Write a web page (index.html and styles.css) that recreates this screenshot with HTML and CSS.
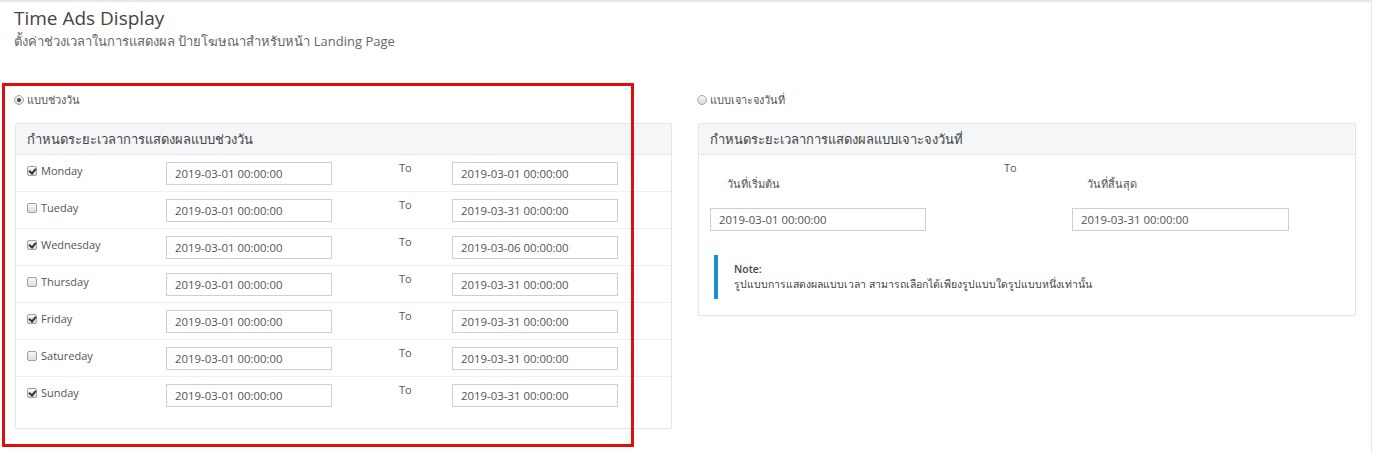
FILE: index.html
```html
<!DOCTYPE html>
<html lang="th">
<head>
    <meta charset="UTF-8">
    <meta name="viewport" content="width=device-width, initial-scale=1.0">
    <title>Time Ads Display</title>
    <link rel="stylesheet" href="styles.css">
</head>
<body>
    <div class="page">
        <div class="page-head">
            <h1>Time Ads Display</h1>
            <p class="sub">ตั้งค่าช่วงเวลาในการแสดงผล ป้ายโฆษณาสำหรับหน้า Landing Page</p>
        </div>

        <div class="cols">
            <!-- แบบช่วงวัน -->
            <div class="col">
                <div class="option"><span class="radio on"></span> แบบช่วงวัน</div>
                <div class="panel">
                    <div class="panel-head">กำหนดระยะเวลาการแสดงผลแบบช่วงวัน</div>
                    <div class="panel-body days">
                        <div class="day-row">
                            <label class="day"><span class="chk on"></span>Monday</label>
                            <input class="field" type="text" value="2019-03-01 00:00:00">
                            <span class="to">To</span>
                            <input class="field" type="text" value="2019-03-01 00:00:00">
                        </div>
                        <div class="day-row">
                            <label class="day"><span class="chk"></span>Tueday</label>
                            <input class="field" type="text" value="2019-03-01 00:00:00">
                            <span class="to">To</span>
                            <input class="field" type="text" value="2019-03-31 00:00:00">
                        </div>
                        <div class="day-row">
                            <label class="day"><span class="chk on"></span>Wednesday</label>
                            <input class="field" type="text" value="2019-03-01 00:00:00">
                            <span class="to">To</span>
                            <input class="field" type="text" value="2019-03-06 00:00:00">
                        </div>
                        <div class="day-row">
                            <label class="day"><span class="chk"></span>Thursday</label>
                            <input class="field" type="text" value="2019-03-01 00:00:00">
                            <span class="to">To</span>
                            <input class="field" type="text" value="2019-03-31 00:00:00">
                        </div>
                        <div class="day-row">
                            <label class="day"><span class="chk on"></span>Friday</label>
                            <input class="field" type="text" value="2019-03-01 00:00:00">
                            <span class="to">To</span>
                            <input class="field" type="text" value="2019-03-31 00:00:00">
                        </div>
                        <div class="day-row">
                            <label class="day"><span class="chk"></span>Satureday</label>
                            <input class="field" type="text" value="2019-03-01 00:00:00">
                            <span class="to">To</span>
                            <input class="field" type="text" value="2019-03-31 00:00:00">
                        </div>
                        <div class="day-row">
                            <label class="day"><span class="chk on"></span>Sunday</label>
                            <input class="field" type="text" value="2019-03-01 00:00:00">
                            <span class="to">To</span>
                            <input class="field" type="text" value="2019-03-31 00:00:00">
                        </div>
                    </div>
                </div>
            </div>

            <!-- แบบเจาะจงวันที่ -->
            <div class="col">
                <div class="option"><span class="radio"></span> แบบเจาะจงวันที่</div>
                <div class="panel">
                    <div class="panel-head">กำหนดระยะเวลาการแสดงผลแบบเจาะจงวันที่</div>
                    <div class="panel-body range">
                        <div class="range-grid">
                            <div>
                                <div class="range-label start">วันที่เริ่มต้น</div>
                                <input class="field wide" type="text" value="2019-03-01 00:00:00">
                            </div>
                            <span class="to">To</span>
                            <div>
                                <div class="range-label end">วันที่สิ้นสุด</div>
                                <input class="field wide" type="text" value="2019-03-31 00:00:00">
                            </div>
                        </div>
                        <div class="note">
                            <strong>Note:</strong>
                            <p>รูปแบบการแสดงผลแบบเวลา สามารถเลือกได้เพียงรูปแบบใดรูปแบบหนึ่งเท่านั้น</p>
                        </div>
                    </div>
                </div>
            </div>
        </div>

        <!-- กรอบไฮไลต์ -->
        <div class="highlight"></div>
    </div>
</body>
</html>
```

FILE: styles.css
```css
/* Base */
body {
    margin: 0;
    font-family: 'Open Sans', 'Noto Sans', 'DejaVu Sans', sans-serif;
    color: #555;
    background-color: #fff;
}

.page {
    position: relative;
    width: 1371px;
    height: 450px;
    border-top: 2px solid #e8e8e8;
    border-right: 1px solid #e4e4e4;
}

.page-head {
    padding: 5px 14px 0;
}

h1 {
    margin: 0;
    font-size: 19px;
    line-height: 22px;
    font-weight: 400;
    color: #444;
}

.sub {
    margin: 3px 0 0;
    font-size: 13px;
    line-height: 18px;
    color: #666;
}

.cols {
    display: grid;
    grid-template-columns: 683px 673px;
    margin-top: 42px;
}

.col {
    padding-left: 14px;
}

.option {
    display: flex;
    align-items: center;
    height: 16px;
    font-size: 11px;
    color: #555;
    margin-bottom: 15px;
}

/* Radio + checkbox (old style gray) */
.radio {
    width: 8px;
    height: 8px;
    border: 1px solid #a8a8a8;
    border-radius: 50%;
    background: linear-gradient(#f6f6f6, #d8d8d8);
    margin-right: 3px;
    position: relative;
}

.radio.on::after {
    content: '';
    position: absolute;
    left: 2px;
    top: 2px;
    width: 4px;
    height: 4px;
    border-radius: 50%;
    background-color: #444;
}

.chk {
    display: inline-block;
    width: 8px;
    height: 8px;
    border: 1px solid #a0a0a0;
    border-radius: 2px;
    background: linear-gradient(#f8f8f8, #dcdcdc);
    margin-right: 4px;
    position: relative;
    flex: none;
}

.chk.on::after {
    content: '';
    position: absolute;
    left: 2px;
    top: 0;
    width: 3px;
    height: 5px;
    border: solid #333;
    border-width: 0 2px 2px 0;
    transform: rotate(40deg);
}

/* Panels */
.panel {
    background-color: #fff;
    border: 1px solid #e4e6e8;
    border-radius: 2px;
    box-shadow: 0 1px 2px rgba(0, 0, 0, 0.03);
}

.col:first-child .panel {
    width: 655px;
    margin-left: 1px;
}

.col + .col .panel {
    width: 656px;
    margin-left: 1px;
}

.panel-head {
    height: 30px;
    line-height: 30px;
    padding-left: 11px;
    font-size: 13px;
    color: #444;
    background-color: #f5f6f8;
    border-bottom: 1px solid #e6e8eb;
}

.panel-body.days {
    padding: 0 0 15px;
}

.day-row {
    display: grid;
    grid-template-columns: 139px 166px 120px 166px;
    align-items: start;
    padding: 7px 0 6px 11px;
    border-bottom: 1px solid #eceef0;
}

.day-row:last-child {
    border-bottom: none;
}

.day {
    display: flex;
    align-items: center;
    margin-top: 1px;
    line-height: 16px;
    font-size: 11px;
    color: #555;
}

.to {
    font-size: 11px;
    line-height: 12px;
    color: #555;
    padding-left: 67px;
}

.field {
    box-sizing: border-box;
    width: 166px;
    height: 23px;
    padding: 0 8px;
    border: 1px solid #cfcfcf;
    border-radius: 0;
    font-family: inherit;
    font-size: 11.4px;
    color: #555;
    background-color: #fff;
}

.field.wide {
    width: 216px;
}

.range-grid div:last-child .field.wide {
    width: 217px;
}

/* Right side */
.panel-body.range {
    padding: 5px 12px 16px 11px;
}

.range-grid {
    display: grid;
    grid-template-columns: 294px 68px 217px;
}

.range-grid .to {
    padding-left: 0;
    line-height: 16px;
}

.range-label {
    margin: 16px 0 15px;
    font-size: 11px;
    line-height: 16px;
    color: #555;
}

.range-label.start {
    padding-left: 17px;
}

.range-label.end {
    padding-left: 15px;
}

.note {
    margin: 24px 0 0 4px;
    padding: 7px 16px;
    border-left: 4px solid #1a8fd2;
    font-size: 10.5px;
    line-height: 15px;
    color: #444;
}

.note strong {
    display: block;
    font-weight: 600;
}

.note p {
    margin: 0;
}

/* Red highlight frame drawn over the left block */
.highlight {
    position: absolute;
    left: 2px;
    top: 81px;
    width: 626px;
    height: 358px;
    border: 3px solid #e00d0d;
    pointer-events: none;
}
```
